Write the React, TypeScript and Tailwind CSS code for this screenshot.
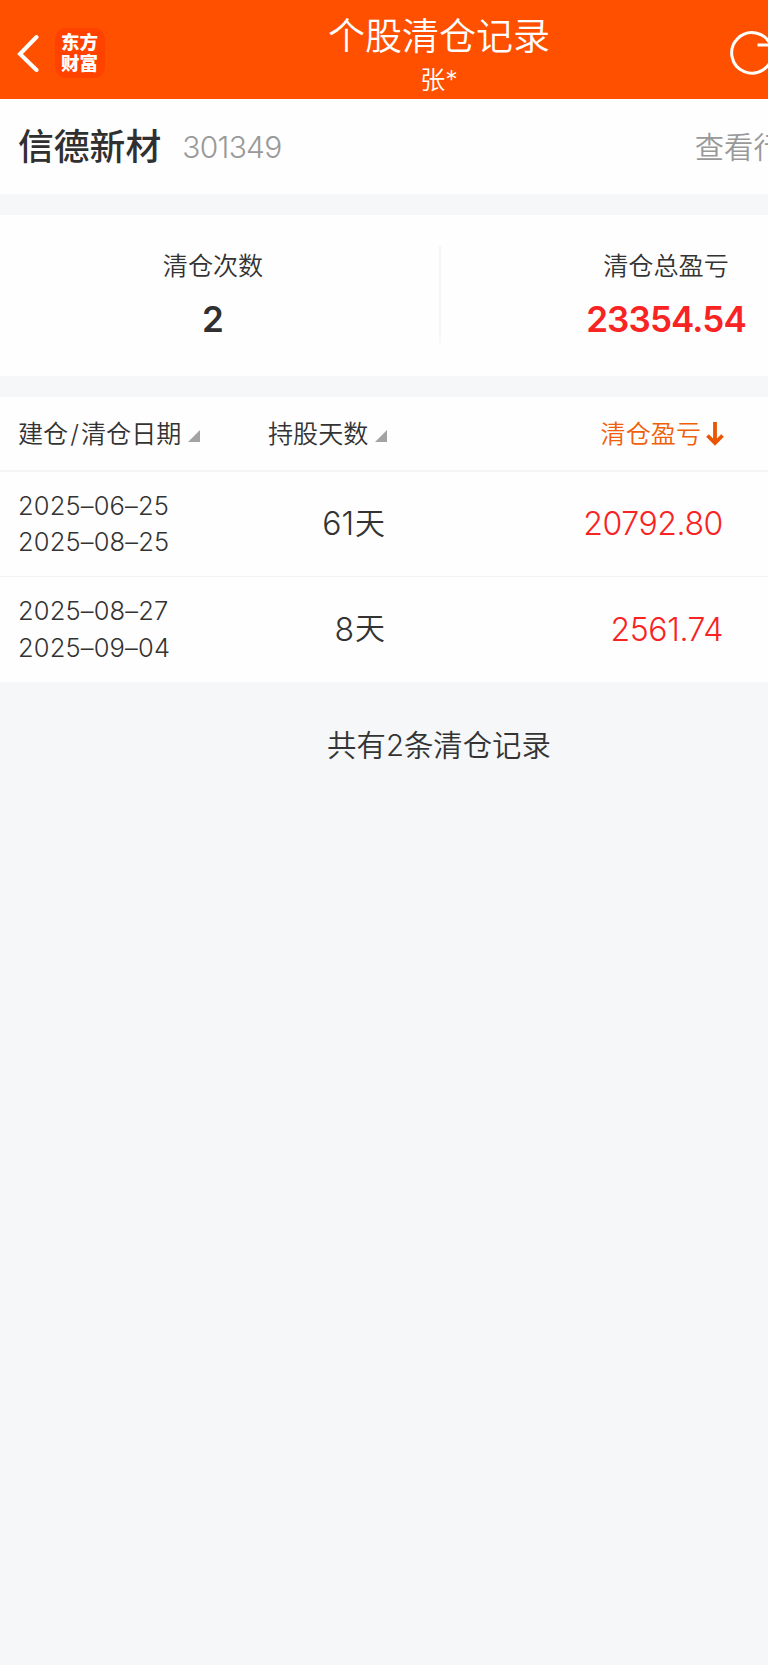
type ClearRecord = {
  opened: string;
  closed: string;
  days: number;
  profit: string;
};

const records: ClearRecord[] = [
  { opened: "2025–06–25", closed: "2025–08–25", days: 61, profit: "20792.80" },
  { opened: "2025–08–27", closed: "2025–09–04", days: 8, profit: "2561.74" },
];

function SortMark() {
  return (
    <svg viewBox="0 0 12 12" className="w-3 h-3 ml-[7px] mt-[2px] shrink-0">
      <path d="M12 0V12H0Z" fill="#a3a3a3" />
    </svg>
  );
}

function Header() {
  return (
    <header className="h-[99px] bg-[#ff5000] text-white flex items-start justify-between">
      <div className="flex items-center w-[200px] pl-[17px] pt-7">
        <svg viewBox="0 0 22 38" className="w-[22px] h-[38px]" fill="none">
          <path
            d="M19.500 3L3 20L19.500 36"
            stroke="#fff"
            strokeWidth="4"
            strokeLinecap="round"
          />
        </svg>
        <div className="ml-[16px] w-[50px] h-[50px] rounded-[11px] bg-[#ff4200] flex flex-col items-center justify-center pr-px text-[18.5px] leading-[21px] font-black">
          <span>东方</span>
          <span>财富</span>
        </div>
      </div>
      <div className="flex flex-col items-center pt-[12px]">
        <h1 className="text-[37px] leading-[50px] font-[350]">个股清仓记录</h1>
        <p className="text-[25px] leading-[36px] font-[350]">张*</p>
      </div>
      <div className="w-[200px] flex pl-[51px] pt-[30px]">
        <svg viewBox="0 0 46 46" className="w-[46px] h-[46px]" fill="none">
          <path
            d="M41.700 15A20.3 20.3 0 1 0 43.300 23M28.500 15H42V2"
            stroke="#fff"
            strokeWidth="3"
          />
        </svg>
      </div>
    </header>
  );
}

function StockBar() {
  return (
    <section className="h-[95px] bg-[#fefefe] flex items-center pl-[18px] pr-[66px] pt-[3px]">
      <h2 className="text-[35.8px] leading-none font-medium text-[#303030]">
        信德新材
      </h2>
      <span className="ml-[21px] mb-[3px] text-[30px] leading-none font-light tracking-[-0.023em] text-[#999]">
        301349
      </span>
      <a className="ml-auto text-[29.3px] leading-none font-[350] text-[#999]">
        查看行情
      </a>
    </section>
  );
}

function Summary() {
  return (
    <section className="h-[161px] mt-[21px] bg-[#fefefe] flex items-start pt-[31px]">
      <div className="w-[441px] h-[97px] flex flex-col items-center pr-[13px] border-r-2 border-[#f5f6f8]">
        <span className="mt-px text-[25.1px] leading-[38px] text-[#333] font-[350]">
          清仓次数
        </span>
        <span className="mt-[12px] text-[35px] leading-[44px] font-semibold text-[#303030]">
          2
        </span>
      </div>
      <div className="flex-1 flex flex-col items-center pl-[13px]">
        <span className="mt-px text-[25.1px] leading-[38px] text-[#333] font-[350]">
          清仓总盈亏
        </span>
        <span className="mt-[12px] text-[35px] leading-[44px] font-semibold tracking-[-0.025em] text-[#f82323]">
          23354.54
        </span>
      </div>
    </section>
  );
}

function Records() {
  return (
    <section className="mt-[21px] bg-[#fefefe] text-[#333] font-[350]">
      <div className="h-[75px] flex items-center pl-[18px] pt-[3px] border-b-2 border-[#f4f5f7] text-[25.1px] leading-none">
        <div className="w-[250px] flex items-center">
          建仓<span className="px-[2px]">/</span>清仓日期
          <SortMark />
        </div>
        <div className="w-[250px] flex items-center">
          持股天数
          <SortMark />
        </div>
        <div className="w-[206px] flex items-center justify-end text-[#f0600a]">
          清仓盈亏
          <svg viewBox="0 0 18 24" className="w-[18px] h-6 ml-[5px] mb-[3px]" fill="none">
            <path d="M9 0V21M1.5 13.5L9 21L16.500 13.500" stroke="#ea5504" strokeWidth="3.8" />
          </svg>
        </div>
      </div>
      {records.map((r) => (
        <div
          key={r.opened}
          className="h-[105px] flex items-center pl-[18px] border-b border-[#f1f2f4] last:border-b-0"
        >
          <div className="w-[200px] text-[25.5px] leading-[36.5px] tracking-[0.006em] whitespace-nowrap font-light">
            <div>{r.opened}</div>
            <div>{r.closed}</div>
          </div>
          <div className="w-[167px] flex items-center justify-end text-[32px] leading-none">
            <span className="mr-px">{r.days}</span>
            <span className="text-[30px] pb-[3px]">天</span>
          </div>
          <div className="w-[338px] text-right text-[32px] leading-none tracking-[-0.012em] text-[#f82323] font-light">
            {r.profit}
          </div>
        </div>
      ))}
    </section>
  );
}

export default function App() {
  return (
    <div className="w-full h-[1665px] overflow-hidden bg-[#f5f7f9] font-['Inter','Noto_Sans_CJK_SC',sans-serif]">
      {/* the page is laid out wider than the viewport and clipped on the right */}
      <div className="w-[878px]">
        <Header />
        <StockBar />
        <Summary />
        <Records />
        <p className="pt-[42px] text-center text-[29.4px] leading-[44px] font-[350] text-[#333]">
          共有2条清仓记录
        </p>
      </div>
    </div>
  );
}
